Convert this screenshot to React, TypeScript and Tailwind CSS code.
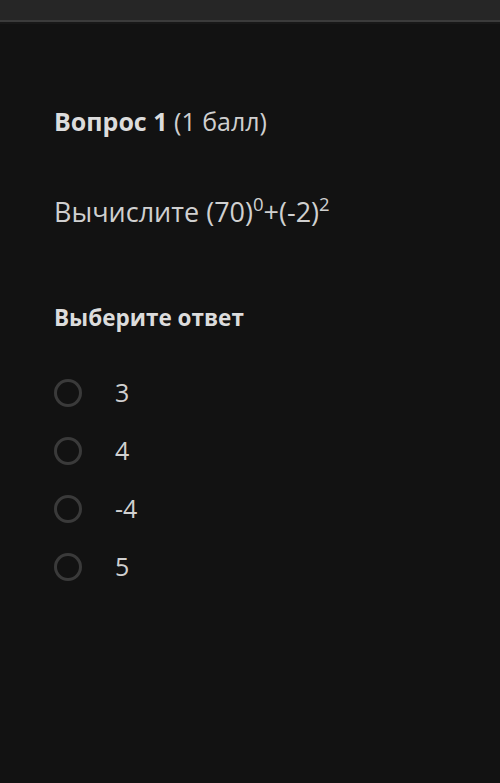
import React from 'react';

const options = ['3', '4', '-4', '5'];

export default function App() {
  return (
    <div className="w-[500px] h-[783px] bg-[#121212] flex flex-col" style={{ fontFamily: '"Open Sans", sans-serif' }}>
      {/* top bar */}
      <div className="h-[22px] bg-[#262626] border-b-2 border-[#3b3b3b]" />
      <div className="h-[2px] bg-[#181818]" />

      <div className="px-[54px] pt-[82px] text-[#dcdcdc]">
        <div className="text-[25px] leading-[30px]">
          <span className="font-bold">Вопрос 1</span> <span className="text-[#cfcfcf]">(1 балл)</span>
        </div>

        <div className="mt-[58px] text-[27px] leading-[36px] text-[#d0d0d0] whitespace-nowrap">
          Вычислите (70)<sup className="text-[18.5px] relative -top-[11px]">0</sup>+(-2)<sup className="text-[18.5px] relative -top-[11px]">2</sup>
        </div>

        <div className="mt-[74px] text-[22.5px] leading-[28px] font-bold text-[#dcdcdc]">Выберите ответ</div>

        <div className="mt-[47px] flex flex-col gap-[30px]">
          {options.map((o) => (
            <div key={o} className="flex items-center h-[28px]">
              <div className="w-[28px] h-[28px] rounded-full border-[3px] border-[#3a3a3a]" />
              <span className="ml-[33px] text-[25px] text-[#d0d0d0]">{o}</span>
            </div>
          ))}
        </div>
      </div>
    </div>
  );
}
